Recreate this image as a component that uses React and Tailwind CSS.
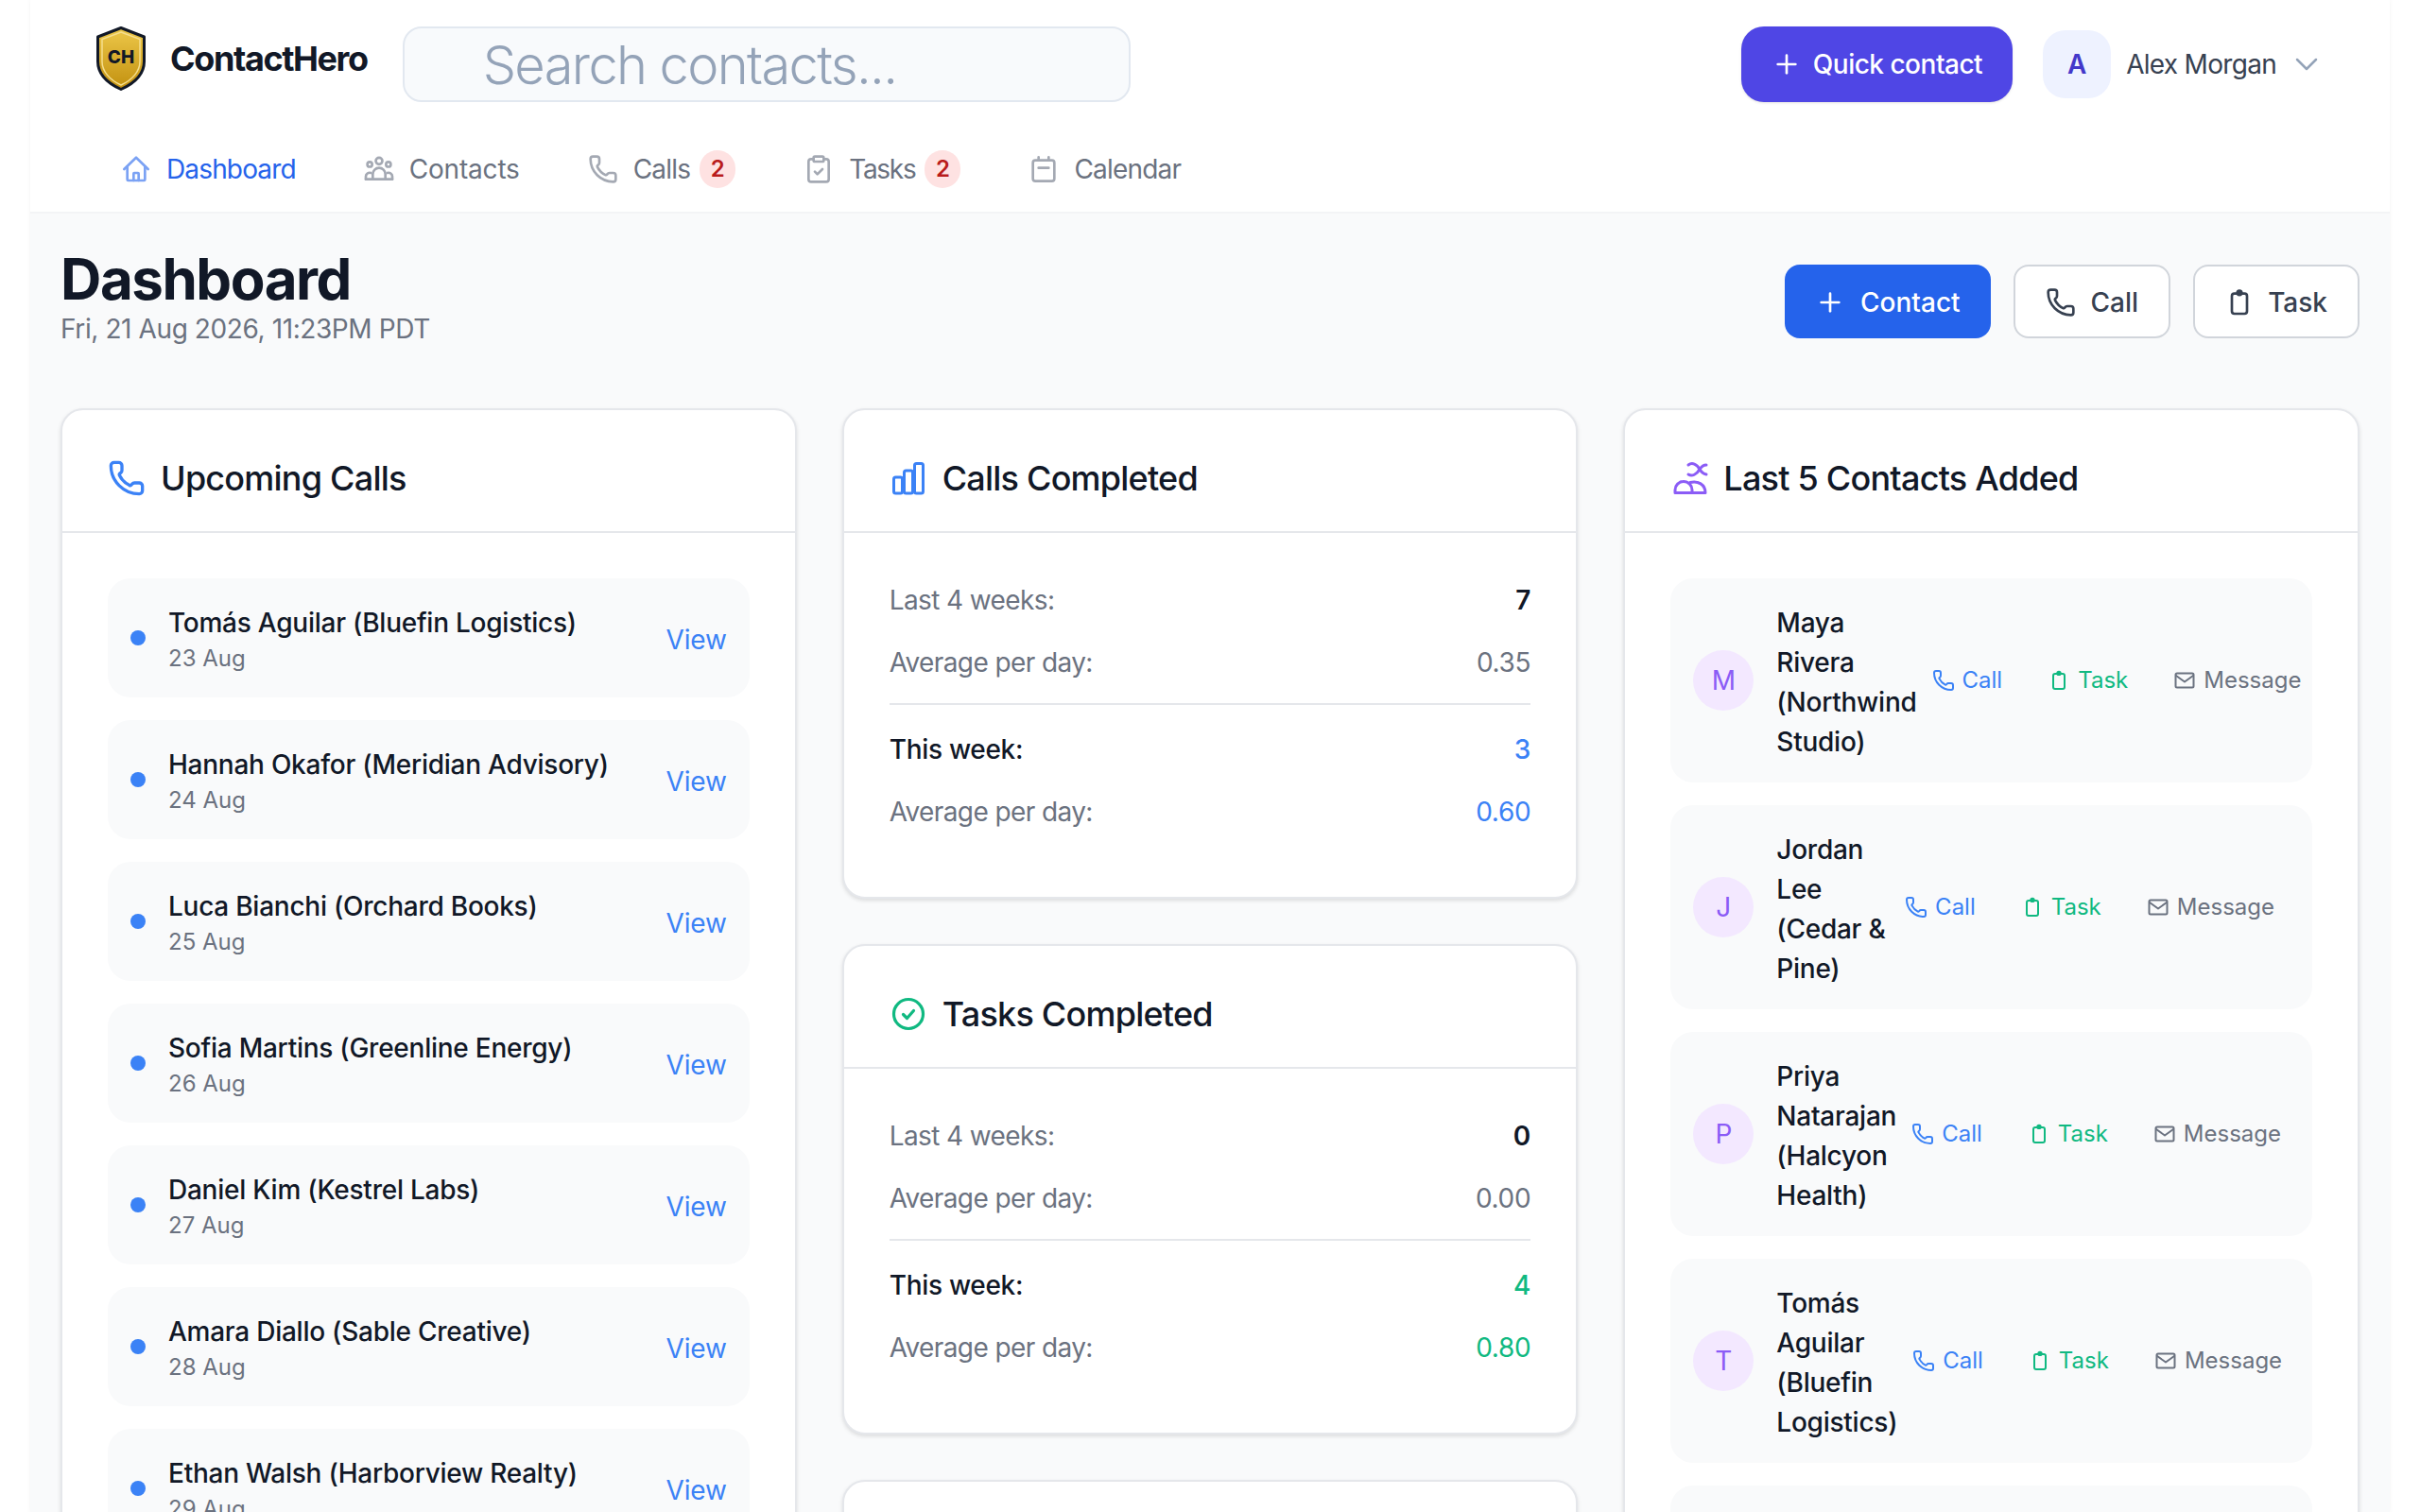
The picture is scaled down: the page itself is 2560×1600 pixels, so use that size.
import React from 'react';
import { Plus, ChevronDown, Phone, ClipboardCheck } from 'lucide-react';

const calls = [
  ['Tomás Aguilar (Bluefin Logistics)', '23 Aug'],
  ['Hannah Okafor (Meridian Advisory)', '24 Aug'],
  ['Luca Bianchi (Orchard Books)', '25 Aug'],
  ['Sofia Martins (Greenline Energy)', '26 Aug'],
  ['Daniel Kim (Kestrel Labs)', '27 Aug'],
  ['Amara Diallo (Sable Creative)', '28 Aug'],
  ['Ethan Walsh (Harborview Realty)', '29 Aug'],
];

const contacts = [
  ['M', 'Maya Rivera (Northwind Studio)'],
  ['J', 'Jordan Lee (Cedar & Pine)'],
  ['P', 'Priya Natarajan (Halcyon Health)'],
  ['T', 'Tomás Aguilar (Bluefin Logistics)'],
  ['H', 'Hannah Okafor (Meridian Advisory)'],
];

const HomeIcon = ({ className }) => (
  <svg viewBox="0 0 24 24" fill="none" stroke="currentColor" strokeWidth="2" strokeLinecap="round" strokeLinejoin="round" className={className}>
    <path d="M2.5 12 12 2.8l9.5 9.2" />
    <path d="M5 10v10.2a.8.8 0 0 0 .8.8h12.4a.8.8 0 0 0 .8-.8V10" />
    <path d="M10 21v-5.5a.5.5 0 0 1 .5-.5h3a.5.5 0 0 1 .5.5V21" />
  </svg>
);

const PeopleIcon = ({ className }) => (
  <svg viewBox="0 0 24 24" fill="none" stroke="currentColor" strokeWidth="2" strokeLinecap="round" strokeLinejoin="round" className={className}>
    <circle cx="12" cy="5.500" r="2.600" />
    <circle cx="4.600" cy="8.200" r="1.900" />
    <circle cx="19.400" cy="8.200" r="1.900" />
    <path d="M7 20v-4a5 5 0 0 1 10 0v4" />
    <path d="M1.500 20v-2.200a3 3 0 0 1 4-2.800M22.500 20v-2.200a3 3 0 0 0-4-2.800" />
    <path d="M1.500 20h21" />
  </svg>
);

const CalendarIcon = ({ className }) => (
  <svg viewBox="0 0 24 24" fill="none" stroke="currentColor" strokeWidth="2" strokeLinecap="round" strokeLinejoin="round" className={className}>
    <rect x="3.500" y="5" width="17" height="16.500" rx="2" />
    <path d="M8 2.500V5M16 2.500V5M8 11h8" />
  </svg>
);

const ClipIcon = ({ className }) => (
  <svg viewBox="0 0 24 24" fill="none" stroke="currentColor" strokeWidth="2" strokeLinecap="round" strokeLinejoin="round" className={className}>
    <rect x="6" y="5" width="12" height="16" rx="2" />
    <circle cx="12" cy="4.400" r="1.700" fill="currentColor" />
  </svg>
);

const MailIcon = ({ className }) => (
  <svg viewBox="0 0 24 24" fill="none" stroke="currentColor" strokeWidth="2" strokeLinecap="round" strokeLinejoin="round" className={className}>
    <rect x="2.500" y="4.500" width="19" height="15" rx="1.500" />
    <path d="m3 7 9 6.500L21 7" />
  </svg>
);

const BarsIcon = ({ className }) => (
  <svg viewBox="0 0 40 40" fill="none" stroke="currentColor" strokeWidth="3" strokeLinejoin="round" className={className}>
    <rect x="4.500" y="19" width="9" height="17" rx="2" />
    <rect x="15.500" y="12" width="9" height="24" rx="2" />
    <rect x="26.500" y="4.500" width="9" height="31.500" rx="2" />
  </svg>
);

const CheckIcon = ({ className }) => (
  <svg viewBox="0 0 40 40" fill="none" stroke="currentColor" strokeWidth="3.200" strokeLinecap="round" strokeLinejoin="round" className={className}>
    <circle cx="20" cy="20" r="15.500" />
    <path d="m14.500 20.500 4 4 7-8" />
  </svg>
);

const NewContactsIcon = ({ className }) => (
  <svg viewBox="8 6 40 40" fill="none" stroke="currentColor" strokeWidth="3" strokeLinecap="round" strokeLinejoin="round" className={className}>
    <path d="M27 12c4-3 9-1 12 4.500-3 5.500-8 8-12 5.500" />
    <path d="M39 16.500c2-3 4-4.500 7-4.500M39 16.500c2 3.500 4 5 7 5.500" />
    <path d="M13 41.500v-3a9 9 0 0 1 18 0v3zM29 30.500c8-2 16 2 16 11H31" />
  </svg>
);

const Logo = () => (
  <svg viewBox="0 0 52 68" className="w-[52px] h-[68px] shrink-0">
    <defs>
      <linearGradient id="gold" x1="0" y1="0" x2="0" y2="1">
        <stop offset="0" stopColor="#edc84a" />
        <stop offset="1" stopColor="#c2900f" />
      </linearGradient>
    </defs>
    <path d="M26 1.500 50.500 11v26c0 13-10 23-24.500 29.500C11.500 60 1.500 50 1.500 37V11z" fill="url(#gold)" stroke="#111827" strokeWidth="3" strokeLinejoin="round" />
    <path d="M26 6 46 13.500V37c0 10.500-8 19.500-20 25-12-5.500-20-14.500-20-25V13.500z" fill="none" stroke="#f5de8e" strokeWidth="1.500" />
    <text x="26" y="39" textAnchor="middle" fontSize="19" fontWeight="800" fill="#111827" style={{ fontFamily: 'Inter, sans-serif' }}>CH</text>
  </svg>
);

const NavItem = ({ icon: Icon, label, badge, active, tracking }) => (
  <div className="flex items-center h-[40px]">
    <Icon className={`w-[32px] h-[32px] shrink-0 ${active ? 'text-[#7ba2f4]' : 'text-[#a4a9b3]'}`} strokeWidth={2} />
    <span className={`ml-[16px] text-[28px] leading-[40px] ${tracking} ${active ? 'text-[#2563eb]' : 'text-[#6b7280]'}`}>{label}</span>
    {badge && (
      <span className="ml-[10px] w-[38px] h-[40px] rounded-full bg-[#fee2e2] text-[#b91c1c] text-[24px] font-semibold flex items-center justify-center">
        {badge}
      </span>
    )}
  </div>
);

const Card = ({ icon, title, children, bodyClass }) => (
  <div className="bg-white border-2 border-[#e5e7eb] rounded-[24px] shadow-[0_2px_4px_rgba(0,0,0,0.12)]">
    <div className="flex items-center gap-[16px] pt-[44px] pb-[28px] px-[48px] border-b-2 border-[#e5e7eb]">
      {icon}
      <h2 className="text-[36px] leading-[56px] font-medium text-[#111827] tracking-[-0.77px]">{title}</h2>
    </div>
    <div className={bodyClass}>{children}</div>
  </div>
);

const StatRow = ({ label, value, labelClass, valueClass }) => (
  <div className="flex items-center justify-between text-[28px] leading-[42px] mt-[2px] -mb-[2px]">
    <span className={labelClass}>{label}</span>
    <span className={valueClass}>{value}</span>
  </div>
);

const StatCard = ({ icon, title, total, avg, week, weekAvg, color }) => (
  <Card icon={icon} title={title} bodyClass="pt-[48px] pb-[71px] px-[48px]">
    <div className="flex flex-col gap-[24px]">
      <StatRow label="Last 4 weeks:" value={total} labelClass="text-[#6b7280] tracking-[-0.6px]" valueClass="font-semibold text-[#111827]" />
      <StatRow label="Average per day:" value={avg} labelClass="text-[#6b7280] tracking-[-0.6px]" valueClass="text-[#6b7280] tracking-[-0.3px]" />
    </div>
    <div className="mt-[24px] pt-[24px] border-t-2 border-[#e5e7eb] flex flex-col gap-[24px]">
      <StatRow label="This week:" value={week} labelClass="font-medium text-[#111827] tracking-[-0.3px]" valueClass={`font-medium ${color}`} />
      <StatRow label="Average per day:" value={weekAvg} labelClass="text-[#6b7280] tracking-[-0.6px]" valueClass={`${color} tracking-[-0.3px]`} />
    </div>
  </Card>
);

const App = () => {
  return (
    <div className="h-screen overflow-hidden bg-white" style={{ fontFamily: 'Inter, sans-serif' }}>
      <div className="mx-[32px] h-full bg-[#f9fafb] shadow-[0_0_4px_rgba(0,0,0,0.06)]">
        <header className="bg-white border-b-2 border-[#f3f4f6] h-[226px]">
          <div className="flex items-start pt-[28px] pl-[70px] pr-[68px]">
            <Logo />
            <span className="ml-[26px] mt-[12px] text-[36px] leading-[44px] font-bold text-[#111827] tracking-[-1.4px]">ContactHero</span>
            <div className="ml-[37px] w-[770px] h-[80px] pt-[2px] rounded-[20px] border-2 border-[#e2e8f0] bg-[#f8fafc] pl-[83px] flex items-center text-[56px] font-light text-[#94a3b8] tracking-[-1.65px]">
              Search contacts...
            </div>
            <button className="ml-auto h-[80px] px-[32px] rounded-[24px] bg-[#4f46e5] text-white text-[28px] font-medium tracking-[-0.5px] flex items-center gap-[12px] shadow-sm">
              <Plus className="w-[32px] h-[32px]" strokeWidth={2} />
              Quick contact
            </button>
            <div className="ml-[32px] mt-[4px] flex items-center">
              <div className="w-[72px] h-[72px] rounded-[24px] bg-[#eef2ff] text-[#4338ca] text-[28px] font-semibold flex items-center justify-center">A</div>
              <span className="ml-[16px] text-[28px] text-[#374151] tracking-[-0.7px]">Alex Morgan</span>
              <ChevronDown className="ml-[12px] w-[40px] h-[40px] text-[#94a3b8]" strokeWidth={1.5} />
            </div>
          </div>
          <nav className="flex items-center gap-[72px] pl-[96px] mt-[51px]">
            <NavItem icon={HomeIcon} label="Dashboard" tracking="tracking-[-0.85px]" active />
            <NavItem icon={PeopleIcon} label="Contacts" tracking="tracking-[-0.2px]" />
            <NavItem icon={Phone} label="Calls" tracking="tracking-[-0.8px]" badge="2" />
            <NavItem icon={ClipboardCheck} label="Tasks" tracking="tracking-[-1.3px]" badge="2" />
            <NavItem icon={CalendarIcon} label="Calendar" tracking="tracking-[-0.8px]" />
          </nav>
        </header>

        <main className="px-[32px] pt-[33px]">
          <div className="flex items-start justify-between">
            <div>
              <h1 className="text-[60px] leading-[72px] font-bold text-[#111827] tracking-[-1.45px]">Dashboard</h1>
              <p className="text-[28px] leading-[34px] text-[#6b7280] tracking-[-0.4px]">Fri, 21 Aug 2026, 11:23PM PDT</p>
            </div>
            <div className="flex items-center gap-[24px] mt-[21px]">
              <button className="h-[78px] pt-[2px] px-[32px] rounded-[16px] bg-[#2563eb] text-white text-[28px] font-medium flex items-center gap-[16px]">
                <Plus className="w-[32px] h-[32px]" strokeWidth={2} />
                Contact
              </button>
              <button className="h-[78px] pt-[2px] px-[32px] rounded-[16px] border-2 border-[#d1d5db] bg-white text-[#374151] text-[28px] font-medium flex items-center gap-[16px]">
                <Phone className="w-[32px] h-[32px]" strokeWidth={2} />
                Call
              </button>
              <button className="h-[78px] pt-[2px] pl-[31px] pr-[32px] rounded-[16px] border-2 border-[#d1d5db] bg-white text-[#374151] text-[28px] font-medium flex items-center gap-[14px]">
                <ClipIcon className="w-[32px] h-[32px]" />
                Task
              </button>
            </div>
          </div>

          <div className="grid grid-cols-3 gap-[48px] mt-[67px] items-start">
            <Card
              icon={<Phone className="w-[40px] h-[40px] text-[#3b82f6]" strokeWidth={2} />}
              title="Upcoming Calls"
              bodyClass="p-[48px] flex flex-col gap-[24px]"
            >
              {calls.map(([name, date]) => (
                <div key={name} className="flex items-center bg-[#f9fafb] rounded-[24px] p-[24px]">
                  <span className="w-[16px] h-[16px] rounded-full bg-[#3b82f6] shrink-0" />
                  <div className="ml-[24px] flex-1">
                    <div className="text-[28px] leading-[42px] font-medium text-[#111827] tracking-[-0.25px] mt-[2px]">{name}</div>
                    <div className="text-[24px] leading-[34px] text-[#6b7280]">{date}</div>
                  </div>
                  <span className="text-[28px] text-[#3b82f6] tracking-[-0.2px] mt-[3px]">View</span>
                </div>
              ))}
            </Card>

            <div className="flex flex-col gap-[48px]">
              <StatCard
                icon={<BarsIcon className="w-[40px] h-[40px] text-[#3b82f6]" />}
                title="Calls Completed"
                total="7"
                avg="0.35"
                week="3"
                weekAvg="0.60"
                color="text-[#3b82f6]"
              />
              <StatCard
                icon={<CheckIcon className="w-[40px] h-[40px] text-[#10b981]" />}
                title="Tasks Completed"
                total="0"
                avg="0.00"
                week="4"
                weekAvg="0.80"
                color="text-[#10b981]"
              />
              <Card icon={<PeopleIcon className="w-[40px] h-[40px] text-[#8b5cf6]" />} title="Contacts Added" bodyClass="h-[200px]" />
            </div>

            <Card
              icon={<NewContactsIcon className="w-[40px] h-[40px] text-[#8b5cf6]" />}
              title="Last 5 Contacts Added"
              bodyClass="p-[48px] flex flex-col gap-[24px]"
            >
              {contacts.map(([initial, name]) => (
                <div key={name} className="flex items-center bg-[#f9fafb] rounded-[24px] p-[24px]">
                  <div className="flex-1 flex items-center gap-[24px]">
                    <div className="w-[64px] h-[64px] rounded-full bg-[#f3e8ff] text-[#8b5cf6] text-[28px] flex items-center justify-center shrink-0">{initial}</div>
                    <div className="text-[28px] leading-[42px] font-medium text-[#111827] tracking-[-0.25px] mt-[2px] -mb-[2px]">{name}</div>
                  </div>
                  <div className="flex items-center gap-[16px] shrink-0 text-[24px] leading-[36px]">
                    <span className="flex items-center gap-[8px] px-[16px] text-[#3b82f6]"><Phone className="w-[24px] h-[24px]" strokeWidth={2} />Call</span>
                    <span className="flex items-center gap-[8px] px-[16px] text-[#10b981]"><ClipIcon className="w-[24px] h-[24px]" />Task</span>
                    <span className="flex items-center gap-[8px] px-[16px] text-[#6b7280]"><MailIcon className="w-[24px] h-[24px]" />Message</span>
                  </div>
                </div>
              ))}
            </Card>
          </div>
        </main>
      </div>
    </div>
  );
};

export default App;
